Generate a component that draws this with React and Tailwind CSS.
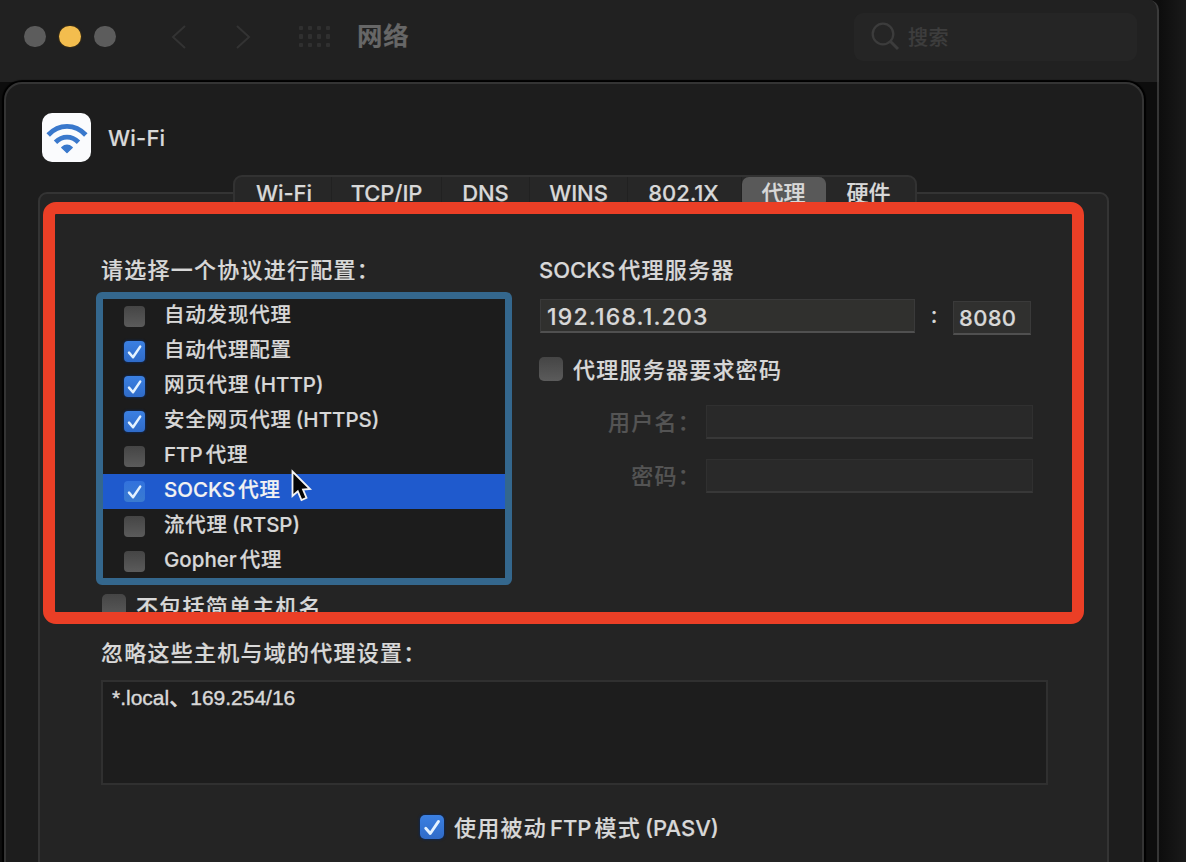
const LATIN = /([A-Za-z0-9()./*-]+)/;

function Label({ text, className = '', cjk = '', latin = '' }) {
  return (
    <span className={`inline-flex items-baseline whitespace-nowrap ${className}`}>
      {text.split(LATIN).filter(Boolean).map((part, i) => (
        <span key={i} className={LATIN.test(part) ? `${latin} ${part.startsWith('(') ? 'ml-1' : i > 0 ? 'ml-[3px]' : ''}` : cjk}>{part}</span>
      ))}
    </span>
  );
}

function Checkbox({ checked, large, selected }) {
  const size = large ? 'size-6 rounded-[5px]' : 'size-[21px] rounded-[4px]';
  const fill = selected
    ? 'bg-linear-to-b from-[#3272dd] to-[#3a7bd0]'
    : checked
      ? 'bg-linear-to-b from-[#3b80e2] to-[#2f6bc8] shadow-[0_0_2px_1px_#10264d]'
      : 'bg-linear-to-b from-[#454545] to-[#5b5b5b]';
  return (
    <span className={`flex shrink-0 items-center justify-center ${size} ${fill}`}>
      {checked && (
        <svg viewBox="0 0 21 21" className="size-full" fill="none" stroke="#e4f2ff" strokeWidth="2.5" strokeLinecap="round" strokeLinejoin="round">
          <path d="M5 11.6 L9 16.2 L16.2 5.6" />
        </svg>
      )}
    </span>
  );
}

const TABS = [
  ['Wi-Fi', 'w-[97px] pl-0.5'],
  ['TCP/IP', 'w-[110px]'],
  ['DNS', 'w-[88px]'],
  ['WINS', 'w-[98px]'],
  ['802.1X', 'w-[114px] pr-0.5'],
  ['代理', 'w-[84px]'],
  ['硬件', 'w-[88px] pr-0.5'],
];

const PROTOCOLS = [
  { name: '自动发现代理' },
  { name: '自动代理配置', on: true },
  { name: '网页代理(HTTP)', on: true },
  { name: '安全网页代理(HTTPS)', on: true },
  { name: 'FTP代理' },
  { name: 'SOCKS代理', on: true, selected: true },
  { name: '流代理(RTSP)' },
  { name: 'Gopher代理' },
];

const big = { cjk: 'text-[22px] tracking-[1.25px]', latin: 'text-[22px] mr-[3px]' };

function TitleBar() {
  return (
    <header className="flex h-[82px] shrink-0 items-start rounded-tr-[10px] border-r-2 border-[#3a3a3a] bg-[#212121]">
      <div className="flex h-[73px] w-full items-center pl-6">
        <div className="flex gap-[13.5px]">
          <span className="size-[21.5px] rounded-full bg-[#5c5c5c]" />
          <span className="size-[21.5px] rounded-full bg-[#f3bd4e] shadow-[0_0_2px_#6b4a08]" />
          <span className="size-[21.5px] rounded-full bg-[#5c5c5c]" />
        </div>
        <svg className="ml-[54px]" width="18" height="28" fill="none" stroke="#333333" strokeWidth="2"><path d="M15 3 L3 14 L15 25" /></svg>
        <svg className="ml-[46px]" width="18" height="28" fill="none" stroke="#333333" strokeWidth="2"><path d="M3 3 L15 14 L3 25" /></svg>
        <div className="ml-[47px] grid grid-cols-4 gap-x-[4.5px] gap-y-[4px]">
          {Array.from({ length: 12 }, (_, i) => <span key={i} className="size-[4.5px] rounded-[1px] bg-[#303030]" />)}
        </div>
        <span className="ml-[27px] text-[25.5px] font-bold tracking-[0.8px] text-[#676767]">网络</span>
        <div className="mr-[20px] ml-auto flex h-12 w-[283px] items-center rounded-[9px] bg-[#252525] pl-[17px]">
          <svg width="29" height="29" fill="none" stroke="#3c3c3c" strokeWidth="2.3"><circle cx="12" cy="12" r="10.3" /><path d="M19.5 19.5 L27 27" strokeWidth="3" /></svg>
          <span className="mt-0.5 ml-2 text-[20px] tracking-[0.5px] text-[#3d3d3d]">搜索</span>
        </div>
      </div>
    </header>
  );
}

function ProtocolPane() {
  return (
    <div className="w-[443px]">
      <Label text={'请选择一个协议进行配置\uFF1A'} {...big} className="ml-[5px] h-[30px] leading-[30px]" />
      <div className="mt-[7px] h-[293px] w-[416px] rounded-[6px] border-[7px] border-[#34678d] bg-[#1c1c1c]">
        {PROTOCOLS.map((p) => (
          <div key={p.name} className={`flex h-[35px] items-center pl-[21px] ${p.selected ? 'bg-[#1f5acd] text-[#f2f2f2]' : ''}`}>
            <Checkbox checked={p.on} selected={p.selected} />
            <Label text={p.name} cjk="text-[20.5px] tracking-[0.8px]" latin="text-[20.5px] mr-[3px]" className="-mt-[3px] ml-[19px] leading-[30px]" />
          </div>
        ))}
      </div>
      <div className="mt-[9px] ml-[6px] flex h-6 items-center">
        <Checkbox large />
        <Label text="不包括简单主机名" {...big} className="mt-px ml-[10px] leading-6" />
      </div>
    </div>
  );
}

function ServerPane() {
  return (
    <div className="w-[496px]">
      <Label text="SOCKS代理服务器" {...big} className="h-[30px] leading-[30px]" />
      <div className="mt-[14px] ml-px flex items-start text-[22px]">
        <div className="flex h-[34px] w-[375px] items-center border border-b-2 border-[#3a3a3a] border-b-[#505050] bg-[#30302e] pt-[3px] pl-1.5 text-[23px] tracking-[1.2px]">192.168.1.203</div>
        <span className="w-[38px] text-center leading-[33px]">:</span>
        <div className="mt-0.5 flex h-[34px] w-[78px] items-center border border-b-2 border-[#3a3a3a] border-b-[#505050] bg-[#30302f] pt-px pl-[5px] tracking-[0.3px]">8080</div>
      </div>
      <div className="mt-[22px] flex h-6 items-center">
        <Checkbox large />
        <Label text="代理服务器要求密码" {...big} className="mt-px ml-2.5 leading-6" />
      </div>
      <div className="mt-[24px] flex flex-col gap-5 text-[#545454]">
        {['用户名\uFF1A', '密码\uFF1A'].map((name) => (
          <div key={name} className="flex h-[34px] items-center">
            <Label text={name} {...big} className="w-[162px] justify-end" />
            <div className="ml-[5px] h-[34px] w-[327px] border border-b-2 border-[#303030] border-b-[#383838] bg-[#292929]" />
          </div>
        ))}
      </div>
    </div>
  );
}

export default function App() {
  return (
    <div className="relative flex h-[862px] w-[1186px] overflow-hidden bg-[#181818] font-[Inter,'Noto_Sans_CJK_SC',sans-serif] font-medium text-[#d8d8d8] [-webkit-text-stroke:0.2px]">
      <main className="flex w-[1159px] shrink-0 flex-col bg-[#0e0e0e]">
        <TitleBar />
        <div className="flex flex-1 border-r-2 border-[#353535] bg-[#0d0d0d] pl-1">
          <section className="h-[790px] w-[1140px] rounded-t-[18px] border-2 border-b-0 border-[#343434] bg-[#1d1d1d] shadow-[0_0_1px_2px_#000]">
            <div className="mt-[29px] ml-[36px] flex h-[49px] items-center">
              <div className="flex size-[49px] items-center justify-center rounded-[10px] bg-[#fafbfd]">
                <svg width="42" height="32" viewBox="0 0 42 32" fill="none" stroke="#3978cc" strokeWidth="4.8">
                  <path d="M2.2 13 C13 1.6 29 1.6 39.8 13" />
                  <path d="M9.5 20.3 C16.5 13.4 25.5 13.4 32.5 20.3" />
                  <path d="M15.8 25.5 Q21 21 26.2 25.5 L21 30.4 Z" fill="#3978cc" strokeWidth="1.4" strokeLinejoin="round" />
                </svg>
              </div>
              <span className="mt-0.5 ml-[17px] text-[22px] tracking-[0.2px]">Wi-Fi</span>
            </div>
            <div className="mt-[30px] ml-8 h-[680px] w-[1071px] rounded-[9px] border-2 border-[#343434] bg-[#242424]">
              <nav className="-mt-[19px] ml-[193px] flex h-[35px] w-[684px] rounded-[9px] border-2 border-[#323232] bg-[#272727] text-[22px] tracking-[-0.1px]">
                {TABS.map(([name, width]) => (
                  <div key={name} className={`flex shrink-0 items-center justify-center border-r leading-none ${width} ${name === '代理' ? 'rounded-[7px] border-[#595959] bg-[#595959]' : name === '硬件' ? 'border-transparent' : 'border-[#212121]'}`}>{name}</div>
                ))}
              </nav>
              <div className="mt-[45px] ml-14 flex">
                <ProtocolPane />
                <ServerPane />
              </div>
              <div className="mt-[20px] ml-[61px]">
                <Label text={'忽略这些主机与域的代理设置\uFF1A'} {...big} className="h-[30px] leading-[30px]" />
                <div className="mt-3 h-[105px] w-[947px] border-2 border-[#303030] bg-[#1d1d1d] pl-[9px] text-[21px] leading-[31px]">
                  <span className="font-['Liberation_Sans','Noto_Sans_CJK_SC',sans-serif] [-webkit-text-stroke:0.4px]">*.local、169.254/16</span>
                </div>
              </div>
              <div className="mt-[30px] ml-[380px] flex h-6 items-center">
                <Checkbox checked large />
                <Label text="使用被动FTP模式(PASV)" {...big} className="mt-0.5 ml-[10px] leading-6" />
              </div>
            </div>
          </section>
        </div>
      </main>
      <div className="w-[27px] bg-linear-to-r from-[#0d0d0d] to-[#1a1a1a]" />
      <div className="pointer-events-none absolute top-[202px] left-[43px] h-[422px] w-[1041px] rounded-[13px] border-[12px] border-[#eb3f26]" />
      <svg className="absolute top-[469px] left-[290px]" width="24" height="34" viewBox="0 0 24 34">
        <path d="M2.5 2.5 V27 L7.8 22.3 L11.5 31 L16.5 28.8 L13 20.5 L20 20 Z" fill="#050505" stroke="#f3f3f3" strokeWidth="1.8" />
      </svg>
    </div>
  );
}
